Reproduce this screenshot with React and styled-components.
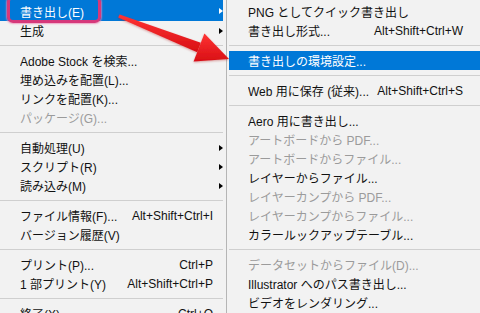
import styled, { createGlobalStyle } from "styled-components";

const GlobalStyle = createGlobalStyle`
  html, body {
    margin: 0;
    padding: 0;
    background: #f2f2f2;
    overflow: hidden;
  }
  * {
    box-sizing: border-box;
  }
`;

const Screen = styled.div`
  position: relative;
  width: 480px;
  height: 313px;
  overflow: hidden;
  display: flex;
  background: #f2f2f2;
  font-family: "Liberation Sans", "Noto Sans CJK JP", sans-serif;
  font-size: 12px;
  color: #111;
`;

const Menu = styled.div`
  flex: none;
  width: ${(p) => p.width}px;
  padding: 0 ${(p) => p.padRight}px 0 ${(p) => p.padLeft}px;
  border-right: ${(p) => (p.divider ? "1px solid #b5b5b5" : "none")};
  display: flex;
  flex-direction: column;
`;

const Row = styled.div`
  flex: none;
  height: 19px;
  display: grid;
  grid-template-columns: 1fr auto 10px;
  align-items: center;
  padding: 0 ${(p) => p.padRight}px 0 ${(p) => p.padLeft}px;
  background: ${(p) => (p.active ? "#0078d7" : "transparent")};
  color: ${(p) => (p.active ? "#fff" : p.disabled ? "#9b9b9b" : "#111")};
  white-space: nowrap;

  &:first-child {
    height: 21px;
    padding-top: 1px;
  }
`;

const Label = styled.span`
  overflow: hidden;
`;

const Shortcut = styled.span`
  text-align: right;
`;

const Arrow = styled.span`
  justify-self: end;
  width: 0;
  height: 0;
  border-top: 3.5px solid transparent;
  border-bottom: 3.5px solid transparent;
  border-left: 4px solid ${(p) => (p.active ? "#fff" : "#000")};
`;

const Separator = styled.div`
  flex: none;
  height: 11px;
  display: flex;
  align-items: center;
  &::after {
    content: "";
    flex: 1;
    height: 1px;
    background: #cfcfcf;
  }
`;

const Marker = styled.div`
  position: absolute;
  left: 7px;
  top: -4px;
  width: 94px;
  height: 27px;
  border: 3px solid #d6387a;
  border-radius: 6px;
  box-shadow: 0 0 1.5px 1px rgba(236, 130, 175, 0.7);
  pointer-events: none;
`;

const Overlay = styled.svg`
  position: absolute;
  left: 0;
  top: 0;
  pointer-events: none;
`;

const leftItems = [
  { label: "書き出し(E)", sub: true, active: true },
  { label: "生成", sub: true },
  "sep",
  { label: "Adobe Stock を検索..." },
  { label: "埋め込みを配置(L)..." },
  { label: "リンクを配置(K)..." },
  { label: "パッケージ(G)...", disabled: true },
  "sep",
  { label: "自動処理(U)", sub: true },
  { label: "スクリプト(R)", sub: true },
  { label: "読み込み(M)", sub: true },
  "sep",
  { label: "ファイル情報(F)...", key: "Alt+Shift+Ctrl+I" },
  { label: "バージョン履歴(V)" },
  "sep",
  { label: "プリント(P)...", key: "Ctrl+P" },
  { label: "1 部プリント(Y)", key: "Alt+Shift+Ctrl+P" },
  "sep",
  { label: "終了(X)", key: "Ctrl+Q" },
];

const rightItems = [
  { label: "PNG としてクイック書き出し" },
  { label: "書き出し形式...", key: "Alt+Shift+Ctrl+W" },
  "sep",
  { label: "書き出しの環境設定...", active: true },
  "sep",
  { label: "Web 用に保存 (従来)...", key: "Alt+Shift+Ctrl+S" },
  "sep",
  { label: "Aero 用に書き出し..." },
  { label: "アートボードから PDF...", disabled: true },
  { label: "アートボードからファイル...", disabled: true },
  { label: "レイヤーからファイル..." },
  { label: "レイヤーカンプから PDF...", disabled: true },
  { label: "レイヤーカンプからファイル...", disabled: true },
  { label: "カラールックアップテーブル..." },
  "sep",
  { label: "データセットからファイル(D)...", disabled: true },
  { label: "Illustrator へのパス書き出し..." },
  { label: "ビデオをレンダリング..." },
];

function MenuList({ items, padLeft, padRight }) {
  return items.map((item, i) =>
    item === "sep" ? (
      <Separator key={i} />
    ) : (
      <Row
        key={i}
        active={item.active}
        disabled={item.disabled}
        padLeft={padLeft}
        padRight={padRight}
      >
        <Label>{item.label}</Label>
        <Shortcut>{item.key || ""}</Shortcut>
        {item.sub ? <Arrow active={item.active} /> : <span />}
      </Row>
    )
  );
}

export default function App() {
  return (
    <>
      <GlobalStyle />
      <Screen>
        <Menu width={227} padLeft={0} padRight={3} divider>
          <MenuList items={leftItems} padLeft={20} padRight={0} />
        </Menu>
        <Menu width={253} padLeft={2} padRight={0}>
          <MenuList items={rightItems} padLeft={19} padRight={7} />
        </Menu>
        <Marker />
        <Overlay width="480" height="313" viewBox="0 0 480 313">
          <defs>
            <linearGradient id="redArrow" x1="0" y1="0" x2="0" y2="1">
              <stop offset="0" stopColor="#ff3434" />
              <stop offset="1" stopColor="#d80e14" />
            </linearGradient>
            <filter id="arrowShadow" x="-10%" y="-10%" width="120%" height="130%">
              <feDropShadow dx="0" dy="1" stdDeviation="1" floodColor="#a00" floodOpacity="0.35" />
            </filter>
          </defs>
          <g filter="url(#arrowShadow)" fill="url(#redArrow)">
            <polygon points="119.6,14.4 118.2,17.6 197.2,52.2 200.8,42.8" />
            <polygon points="229,59 204.4,33.5 193.6,61.5" />
          </g>
        </Overlay>
      </Screen>
    </>
  );
}
